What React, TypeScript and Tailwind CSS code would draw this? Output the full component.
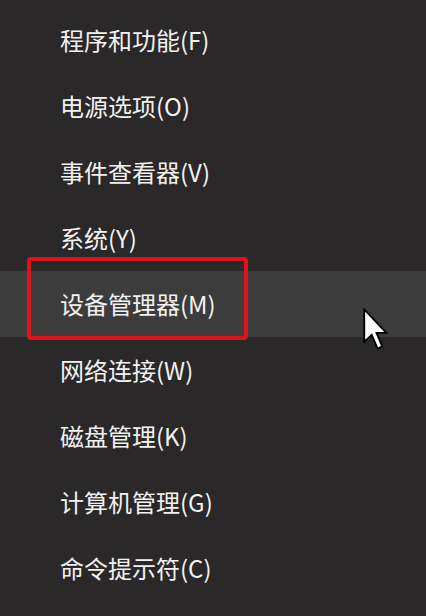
import React from "react";

const items = [
  "程序和功能(F)",
  "电源选项(O)",
  "事件查看器(V)",
  "系统(Y)",
  "设备管理器(M)",
  "网络连接(W)",
  "磁盘管理(K)",
  "计算机管理(G)",
  "命令提示符(C)",
];

export default function App() {
  return (
    <div
      className="relative w-[426px] h-[616px] overflow-hidden bg-[#2a2828] pt-[7px]"
      style={{ fontFamily: '"Noto Sans CJK SC", "Noto Sans", sans-serif' }}
    >
      <div className="flex flex-col">
        {items.map((t, i) => (
          <div
            key={t}
            className={
              i === 4
                ? "h-[66px] flex items-center pl-[60px] bg-[#3d3c3c] text-[24px] text-[#f2f2f2]"
                : "h-[66px] flex items-center pl-[60px] text-[24px] text-[#f2f2f2]"
            }
          >
            <span className="leading-none">{t}</span>
          </div>
        ))}
      </div>
      <div className="absolute left-[27px] top-[257px] w-[221px] h-[83px] border-[4px] border-[#e0121c] rounded-[4px]" />
      <svg
        className="absolute left-[363px] top-[308px]"
        width="25"
        height="44"
        viewBox="0 0 12 21"
      >
        <path
          d="M0.6 0.6 L0.6 16.2 L4.2 12.8 L7 19.4 L9.2 18.4 L6.5 11.9 L11.2 11.9 Z"
          fill="#ffffff"
          stroke="#000000"
          strokeWidth="0.9"
          strokeLinejoin="miter"
        />
      </svg>
    </div>
  );
}
